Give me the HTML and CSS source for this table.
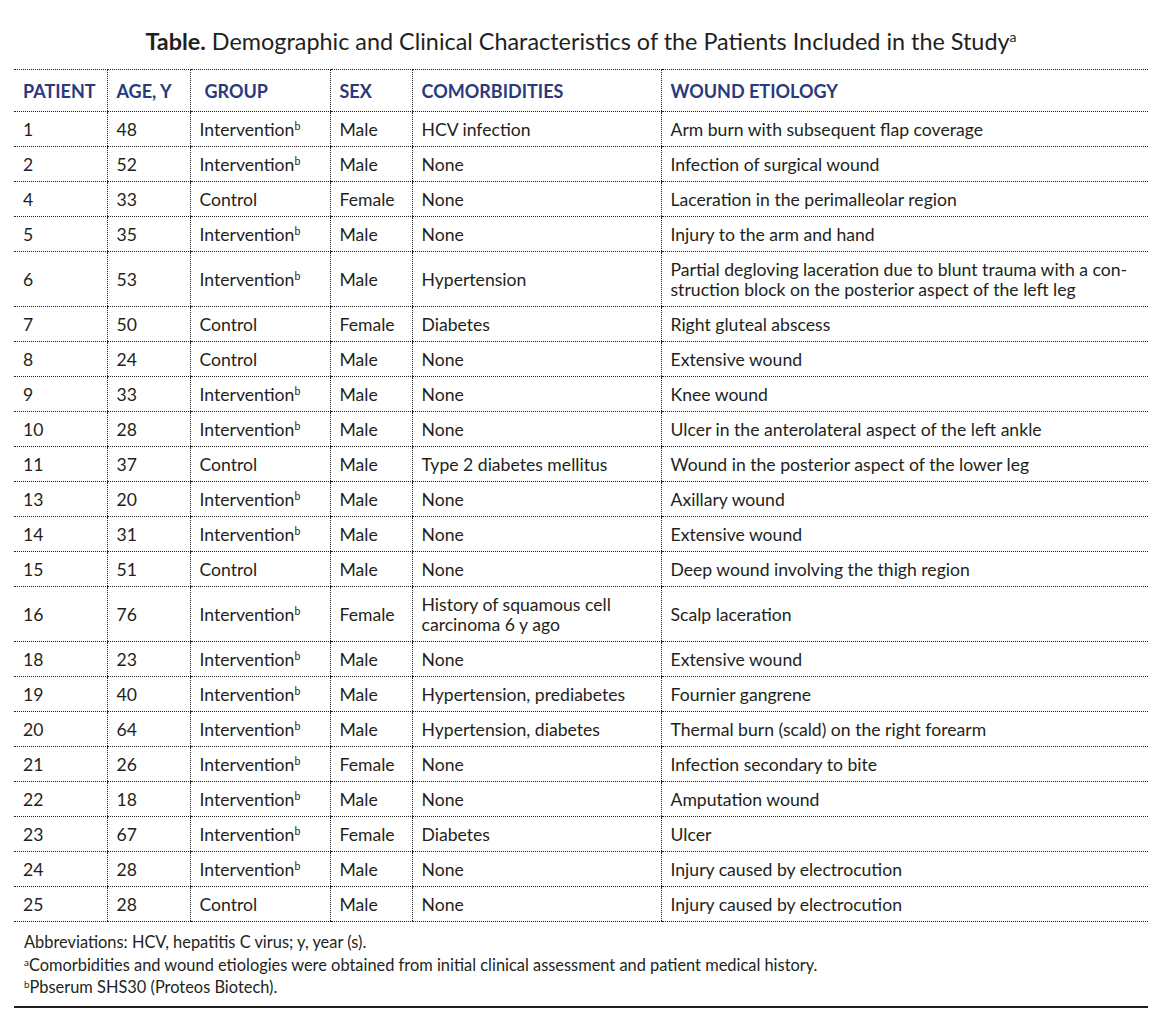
FILE: index.html
```html
<!DOCTYPE html>
<html lang="en">
<head>
<meta charset="utf-8">
<title>Table</title>
<link rel="stylesheet" href="styles.css">
</head>
<body>
<div class="page">
  <h1 class="title"><b>Table.</b> Demographic and Clinical Characteristics of the Patients Included in the Study<span class="sup">a</span></h1>
  <table class="data">
    <colgroup>
      <col class="c1"><col class="c2"><col class="c3"><col class="c4"><col class="c5"><col class="c6">
    </colgroup>
    <thead>
      <tr><th>PATIENT</th><th>AGE, Y</th><th class="grp">GROUP</th><th>SEX</th><th>COMORBIDITIES</th><th>WOUND ETIOLOGY</th></tr>
    </thead>
    <tbody>
      <tr><td>1</td><td>48</td><td>Intervention<span class="sup">b</span></td><td>Male</td><td>HCV infection</td><td>Arm burn with subsequent flap coverage</td></tr>
      <tr><td>2</td><td>52</td><td>Intervention<span class="sup">b</span></td><td>Male</td><td>None</td><td>Infection of surgical wound</td></tr>
      <tr><td>4</td><td>33</td><td>Control</td><td>Female</td><td>None</td><td>Laceration in the perimalleolar region</td></tr>
      <tr><td>5</td><td>35</td><td>Intervention<span class="sup">b</span></td><td>Male</td><td>None</td><td>Injury to the arm and hand</td></tr>
      <tr><td>6</td><td>53</td><td>Intervention<span class="sup">b</span></td><td>Male</td><td>Hypertension</td><td>Partial degloving laceration due to blunt trauma with a con-<br>struction block on the posterior aspect of the left leg</td></tr>
      <tr><td>7</td><td>50</td><td>Control</td><td>Female</td><td>Diabetes</td><td>Right gluteal abscess</td></tr>
      <tr><td>8</td><td>24</td><td>Control</td><td>Male</td><td>None</td><td>Extensive wound</td></tr>
      <tr><td>9</td><td>33</td><td>Intervention<span class="sup">b</span></td><td>Male</td><td>None</td><td>Knee wound</td></tr>
      <tr><td>10</td><td>28</td><td>Intervention<span class="sup">b</span></td><td>Male</td><td>None</td><td>Ulcer in the anterolateral aspect of the left ankle</td></tr>
      <tr><td>11</td><td>37</td><td>Control</td><td>Male</td><td>Type 2 diabetes mellitus</td><td>Wound in the posterior aspect of the lower leg</td></tr>
      <tr><td>13</td><td>20</td><td>Intervention<span class="sup">b</span></td><td>Male</td><td>None</td><td>Axillary wound</td></tr>
      <tr><td>14</td><td>31</td><td>Intervention<span class="sup">b</span></td><td>Male</td><td>None</td><td>Extensive wound</td></tr>
      <tr><td>15</td><td>51</td><td>Control</td><td>Male</td><td>None</td><td>Deep wound involving the thigh region</td></tr>
      <tr><td>16</td><td>76</td><td>Intervention<span class="sup">b</span></td><td>Female</td><td>History of squamous cell<br>carcinoma 6 y ago</td><td>Scalp laceration</td></tr>
      <tr><td>18</td><td>23</td><td>Intervention<span class="sup">b</span></td><td>Male</td><td>None</td><td>Extensive wound</td></tr>
      <tr><td>19</td><td>40</td><td>Intervention<span class="sup">b</span></td><td>Male</td><td>Hypertension, prediabetes</td><td>Fournier gangrene</td></tr>
      <tr><td>20</td><td>64</td><td>Intervention<span class="sup">b</span></td><td>Male</td><td>Hypertension, diabetes</td><td>Thermal burn (scald) on the right forearm</td></tr>
      <tr><td>21</td><td>26</td><td>Intervention<span class="sup">b</span></td><td>Female</td><td>None</td><td>Infection secondary to bite</td></tr>
      <tr><td>22</td><td>18</td><td>Intervention<span class="sup">b</span></td><td>Male</td><td>None</td><td>Amputation wound</td></tr>
      <tr><td>23</td><td>67</td><td>Intervention<span class="sup">b</span></td><td>Female</td><td>Diabetes</td><td>Ulcer</td></tr>
      <tr><td>24</td><td>28</td><td>Intervention<span class="sup">b</span></td><td>Male</td><td>None</td><td>Injury caused by electrocution</td></tr>
      <tr><td>25</td><td>28</td><td>Control</td><td>Male</td><td>None</td><td>Injury caused by electrocution</td></tr>
    </tbody>
  </table>
  <div class="notes">
    <p>Abbreviations: HCV, hepatitis C virus; y, year (s).</p>
    <p><span class="sup">a</span>Comorbidities and wound etiologies were obtained from initial clinical assessment and patient medical history.</p>
    <p><span class="sup">b</span>Pbserum SHS30 (Proteos Biotech).</p>
  </div>
</div>
</body>
</html>
```

FILE: styles.css
```css
html, body {
  margin: 0;
  padding: 0;
  background: #ffffff;
}

body {
  font-family: Lato, "Noto Sans", sans-serif;
  color: #231f20;
}

.page {
  width: 1134px;
  margin-left: 14px;
  padding-top: 27px;
}

.title {
  margin: 0 0 14px 0;
  font-size: 23.4px;
  line-height: 28px;
  font-weight: 400;
  text-align: center;
}

.title b {
  font-weight: 700;
}

.sup {
  font-size: 0.6em;
  line-height: 0;
  vertical-align: 0.55em;
}

.data {
  width: 1134px;
  border-collapse: collapse;
  table-layout: fixed;
  font-size: 17.6px;
}

.c1 { width: 93px; }
.c2 { width: 83px; }
.c3 { width: 140px; }
.c4 { width: 82px; }
.c5 { width: 249px; }
.c6 { width: 487px; }

.data th,
.data td {
  text-align: left;
  padding: 7px 9px;
  line-height: 20px;
  border-bottom: 1px dotted #222;
  border-left: 1px dotted #222;
  vertical-align: middle;
}

.data td {
  padding-top: 8px;
  padding-bottom: 6px;
}

.data tr > :first-child {
  border-left: none;
}

.data th {
  border-top: 1px dotted #222;
  padding-top: 11px;
  padding-bottom: 10px;
  color: #2a3a7c;
  font-weight: 700;
  font-size: 18px;
}

.data th.grp {
  padding-left: 14px;
}

.notes {
  padding: 9px 10px 7px 10px;
  border-bottom: 2px solid #231f20;
  font-size: 16.4px;
  line-height: 22.5px;
}

.notes p {
  margin: 0;
}
```
